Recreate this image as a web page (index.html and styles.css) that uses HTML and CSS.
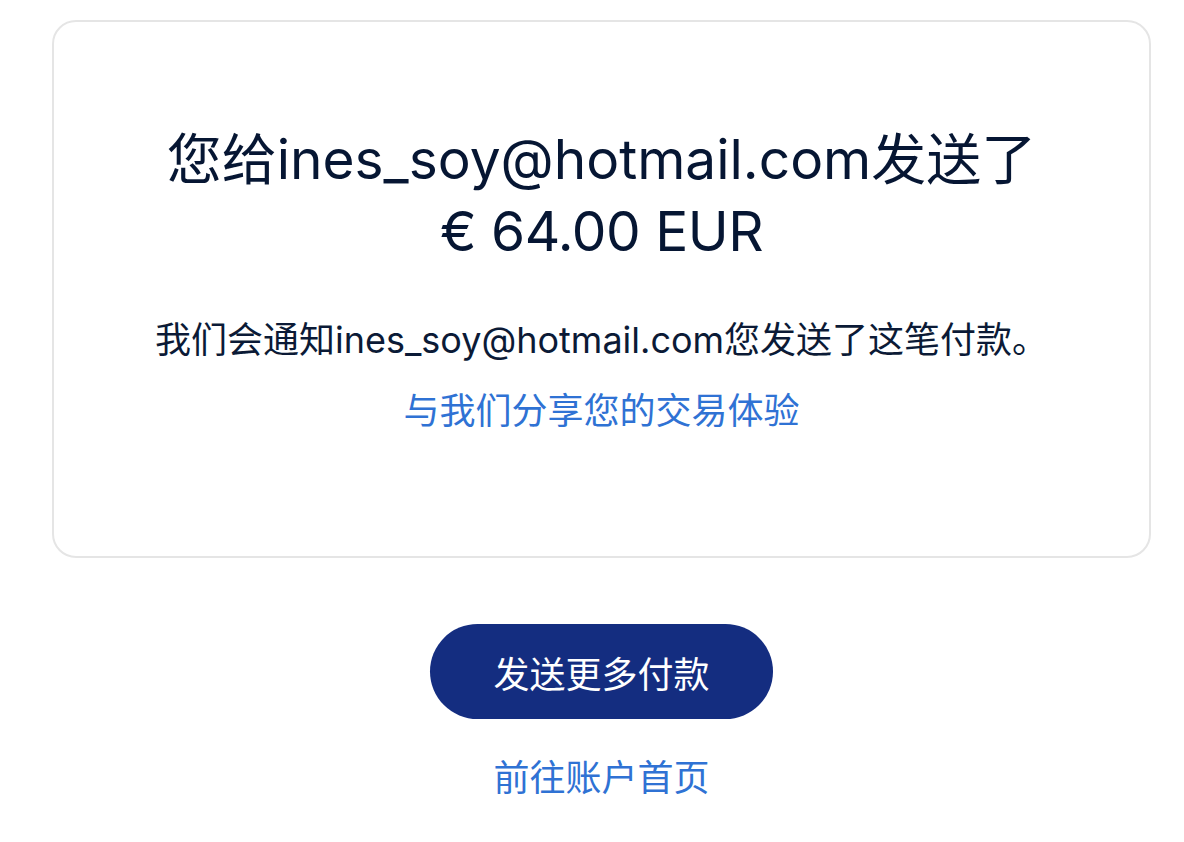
FILE: index.html
```html
<!DOCTYPE html>
<html lang="zh-CN">
<head>
<meta charset="utf-8">
<link rel="stylesheet" href="styles.css">
<title>付款已发送</title>
</head>
<body>
<main class="page">
  <section class="card">
    <h1 class="title">您给ines_soy@hotmail.com发送了<br><span class="amount">€ 64.00 EUR</span></h1>
    <p class="note">我们会通知ines_soy@hotmail.com您发送了这笔付款。</p>
    <a class="link feedback" href="#">与我们分享您的交易体验</a>
  </section>
  <div class="actions">
    <a class="btn-primary" href="#">发送更多付款</a>
    <a class="link home" href="#">前往账户首页</a>
  </div>
</main>
</body>
</html>
```

FILE: styles.css
```css
* { box-sizing: border-box; }
html, body { margin: 0; padding: 0; background: #ffffff; }
body {
  font-family: Inter, "Noto Sans CJK SC", sans-serif;
  color: #0b1a36;
}
.page {
  padding: 20px 33px 0 52px;
}
.card {
  border: 2px solid #e5e5e5;
  border-radius: 24px;
  height: 538px;
  padding: 101px 20px 0;
  display: flex;
  flex-direction: column;
  align-items: center;
  text-align: center;
}
.title {
  margin: 0;
  font-size: 55px;
  line-height: 72px;
  font-weight: 400;
  color: #061633;
}
.amount {
  letter-spacing: -0.5px;
}
.note {
  margin: 49px 0 0;
  font-size: 36px;
  line-height: 48px;
  color: #0b1a36;
}
.link {
  color: #2f72d4;
  text-decoration: none;
  font-size: 36px;
  line-height: 48px;
}
.feedback {
  margin-top: 23px;
}
.actions {
  display: flex;
  flex-direction: column;
  align-items: center;
  padding-top: 66px;
}
.btn-primary {
  display: flex;
  align-items: center;
  justify-content: center;
  width: 343px;
  height: 95px;
  border-radius: 48px;
  background: #142d80;
  color: #ffffff;
  text-decoration: none;
  font-size: 36px;
}
.home {
  margin-top: 35px;
}
```
